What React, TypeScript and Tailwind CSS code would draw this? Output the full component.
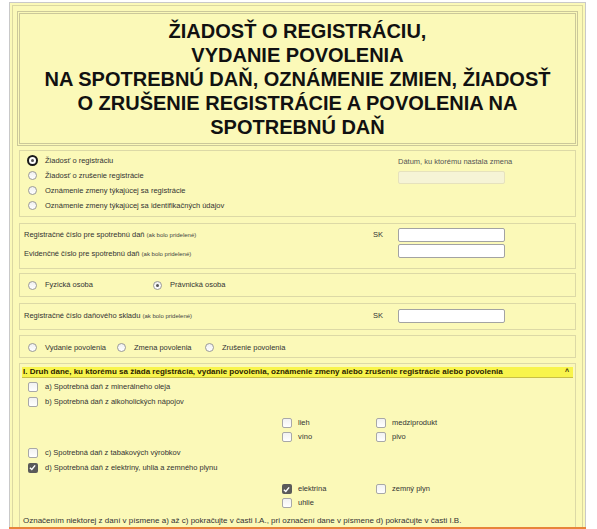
const small = "font-['Liberation_Sans',Arial,sans-serif] text-[7.5px] text-[#333]";

function Radio({ checked = false, focused = false }: { checked?: boolean; focused?: boolean }) {
  return (
    <span className="flex w-[11px] h-[11px] items-center justify-center shrink-0">
      {focused ? (
        <span className="flex w-[11px] h-[11px] items-center justify-center rounded-full border-2 border-[#1a1a1a] bg-white">
          <span className="w-[3px] h-[3px] rounded-full bg-[#555]" />
        </span>
      ) : (
        <span className="flex w-[9px] h-[9px] items-center justify-center rounded-full border border-[#9a9a9a] bg-gradient-to-b from-[#f0f0f0] to-white">
          {checked && <span className="w-[3px] h-[3px] rounded-full bg-[#555]" />}
        </span>
      )}
    </span>
  );
}

function Check({ checked = false }: { checked?: boolean }) {
  return (
    <span className="flex w-[11px] h-[11px] items-center justify-center shrink-0">
      {checked ? (
        <span className="flex w-[10px] h-[10px] items-center justify-center rounded-[2px] bg-[#5a5a5a]">
          <svg width="7" height="7" viewBox="0 0 8 8">
            <path d="M1 4.2 L3.2 6.3 L7 1.5" fill="none" stroke="white" strokeWidth="1.6" />
          </svg>
        </span>
      ) : (
        <span className="w-[10px] h-[10px] rounded-[2px] border border-[#a8a8a8] bg-gradient-to-b from-[#f2f2f2] to-white" />
      )}
    </span>
  );
}

function Sub({ children }: { children: React.ReactNode }) {
  return <span className="text-[6px] text-[#444]">{children}</span>;
}

export default function App() {
  return (
    <div className="min-h-screen bg-white">
      <div className="ml-[9px] mt-[2px] w-[577px] border border-b-0 border-[#c9c9c9] bg-[#fbf9b8] px-[2px] pt-[2px]">
        <div className="border border-b-0 border-[#dad7a2] px-[4px] pt-[5px]">
          {/* Title */}
          <div className="border-[3px] border-double border-[#cbc89a] pt-[5px] pb-[4px] text-center font-['Liberation_Sans',Arial,sans-serif] text-[20px] font-bold leading-[24px] text-[#111]">
            <div>ŽIADOSŤ O REGISTRÁCIU,</div>
            <div>VYDANIE POVOLENIA</div>
            <div>NA SPOTREBNÚ DAŇ, OZNÁMENIE ZMIEN, ŽIADOSŤ</div>
            <div>O ZRUŠENIE REGISTRÁCIE A POVOLENIA NA</div>
            <div>SPOTREBNÚ DAŇ</div>
          </div>

          <div className={`px-[2px] ${small}`}>
            {/* Type of request */}
            <div className="mt-[4px] flex border border-[#dcd9a6] pt-[2px] pb-[3px]">
              <div className="flex-1 pl-[7px]">
                {[
                  "Žiadosť o registráciu",
                  "Žiadosť o zrušenie registrácie",
                  "Oznámenie zmeny týkajúcej sa registrácie",
                  "Oznámenie zmeny týkajúcej sa identifikačných údajov",
                ].map((t, i) => (
                  <div key={t} className="flex h-[15px] items-center gap-[7px]">
                    <Radio focused={i === 0} />
                    <span>{t}</span>
                  </div>
                ))}
              </div>
              <div className="mr-[70px] w-[107px] pt-[4px]">
                <div className="h-[10px] whitespace-nowrap leading-[10px] text-[#555]">Dátum, ku ktorému nastala zmena</div>
                <div className="mt-[4px] h-[13px] rounded-[2px] border border-[#e6e2bd] bg-[#f6f4d6]" />
              </div>
            </div>

            {/* Registration numbers */}
            <div className="mt-[6px] flex border border-[#dcd9a6] pt-[4px] pb-[7px]">
              <div className="flex-1 pl-[4px]">
                <div className="flex h-[14px] items-center">
                  Registračné číslo pre spotrebnú daň&nbsp;<Sub>(ak bolo pridelené)</Sub>
                </div>
                <div className="mt-[5px] flex h-[14px] items-center">
                  Evidenčné číslo pre spotrebnú daň&nbsp;<Sub>(ak bolo pridelené)</Sub>
                </div>
              </div>
              <div className="flex h-[14px] w-[25px] items-center">SK</div>
              <div className="mr-[70px] flex w-[107px] flex-col gap-[2px]">
                <div className="h-[14px] rounded-[2px] border border-[#a3a3a3] bg-white" />
                <div className="h-[14px] rounded-[2px] border border-[#a3a3a3] bg-white" />
              </div>
            </div>

            {/* Person type */}
            <div className="mt-[4px] flex h-[24px] items-center border border-[#dcd9a6] pl-[7px]">
              <div className="flex w-[125px] items-center gap-[7px]">
                <Radio />
                <span>Fyzická osoba</span>
              </div>
              <div className="flex items-center gap-[7px]">
                <Radio checked />
                <span>Právnická osoba</span>
              </div>
            </div>

            {/* Tax warehouse */}
            <div className="mt-[6px] flex border border-[#dcd9a6] pt-[5px] pb-[6px]">
              <div className="flex h-[14px] flex-1 items-center pl-[4px]">
                Registračné číslo daňového skladu&nbsp;<Sub>(ak bolo pridelené)</Sub>
              </div>
              <div className="flex h-[14px] w-[25px] items-center">SK</div>
              <div className="mr-[70px] h-[14px] w-[107px] rounded-[2px] border border-[#a3a3a3] bg-white" />
            </div>

            {/* Permit */}
            <div className="mt-[5px] flex h-[23px] items-center border border-[#dcd9a6] pl-[7px] pt-[2px]">
              <div className="flex w-[89px] items-center gap-[7px]">
                <Radio />
                <span>Vydanie povolenia</span>
              </div>
              <div className="flex w-[88px] items-center gap-[7px]">
                <Radio />
                <span>Zmena povolenia</span>
              </div>
              <div className="flex items-center gap-[7px]">
                <Radio />
                <span>Zrušenie povolenia</span>
              </div>
            </div>

            {/* Section I */}
            <div className="mt-[5px] border border-b-0 border-[#dcd9a6] px-[2px] pt-[3px]">
              <div className="flex h-[11px] items-center justify-between border-b border-[#c9bf45] bg-[#f8f44c] pl-[1px] pr-[4px] text-[8px] font-bold text-[#2a2200]">
                <span>
                  I. Druh dane, ku ktorému sa žiada registrácia, vydanie povolenia, oznámenie zmeny alebo zrušenie
                  registrácie alebo povolenia
                </span>
                <span className="text-[7px]">^</span>
              </div>

              <div className="mt-[1px] pl-[5px]">
                <div className="flex h-[15px] items-center gap-[7px]">
                  <Check />
                  <span>a) Spotrebná daň z minerálneho oleja</span>
                </div>
                <div className="flex h-[15px] items-center gap-[7px]">
                  <Check />
                  <span>b) Spotrebná daň z alkoholických nápojov</span>
                </div>

                <div className="ml-[254px] mt-[7px] grid w-[200px] grid-cols-[94px_1fr]">
                  {["lieh", "medziprodukt", "víno", "pivo"].map((t) => (
                    <div key={t} className="flex h-[14px] items-center gap-[6px]">
                      <Check />
                      <span>{t}</span>
                    </div>
                  ))}
                </div>

                <div className="mt-[1px] flex h-[15px] items-center gap-[7px]">
                  <Check />
                  <span>c) Spotrebná daň z tabakových výrobkov</span>
                </div>
                <div className="flex h-[15px] items-center gap-[7px]">
                  <Check checked />
                  <span>d) Spotrebná daň z elektriny, uhlia a zemného plynu</span>
                </div>

                <div className="ml-[254px] mt-[7px] grid w-[200px] grid-cols-[94px_1fr]">
                  <div className="flex h-[14px] items-center gap-[6px]">
                    <Check checked />
                    <span>elektrina</span>
                  </div>
                  <div className="flex h-[14px] items-center gap-[6px]">
                    <Check />
                    <span>zemný plyn</span>
                  </div>
                  <div className="flex h-[14px] items-center gap-[6px]">
                    <Check />
                    <span>uhlie</span>
                  </div>
                </div>
              </div>

              <div className="mt-[5px] flex h-[12px] items-center pl-[1px] text-[8px]">
                Označením niektorej z daní v písmene a) až c) pokračujte v časti I.A., pri označení dane v písmene d)
                pokračujte v časti I.B.
              </div>
            </div>
          </div>
        </div>
      </div>
      <div className="ml-[9px] h-[2px] w-[577px] bg-[#e8843a]" />
    </div>
  );
}
